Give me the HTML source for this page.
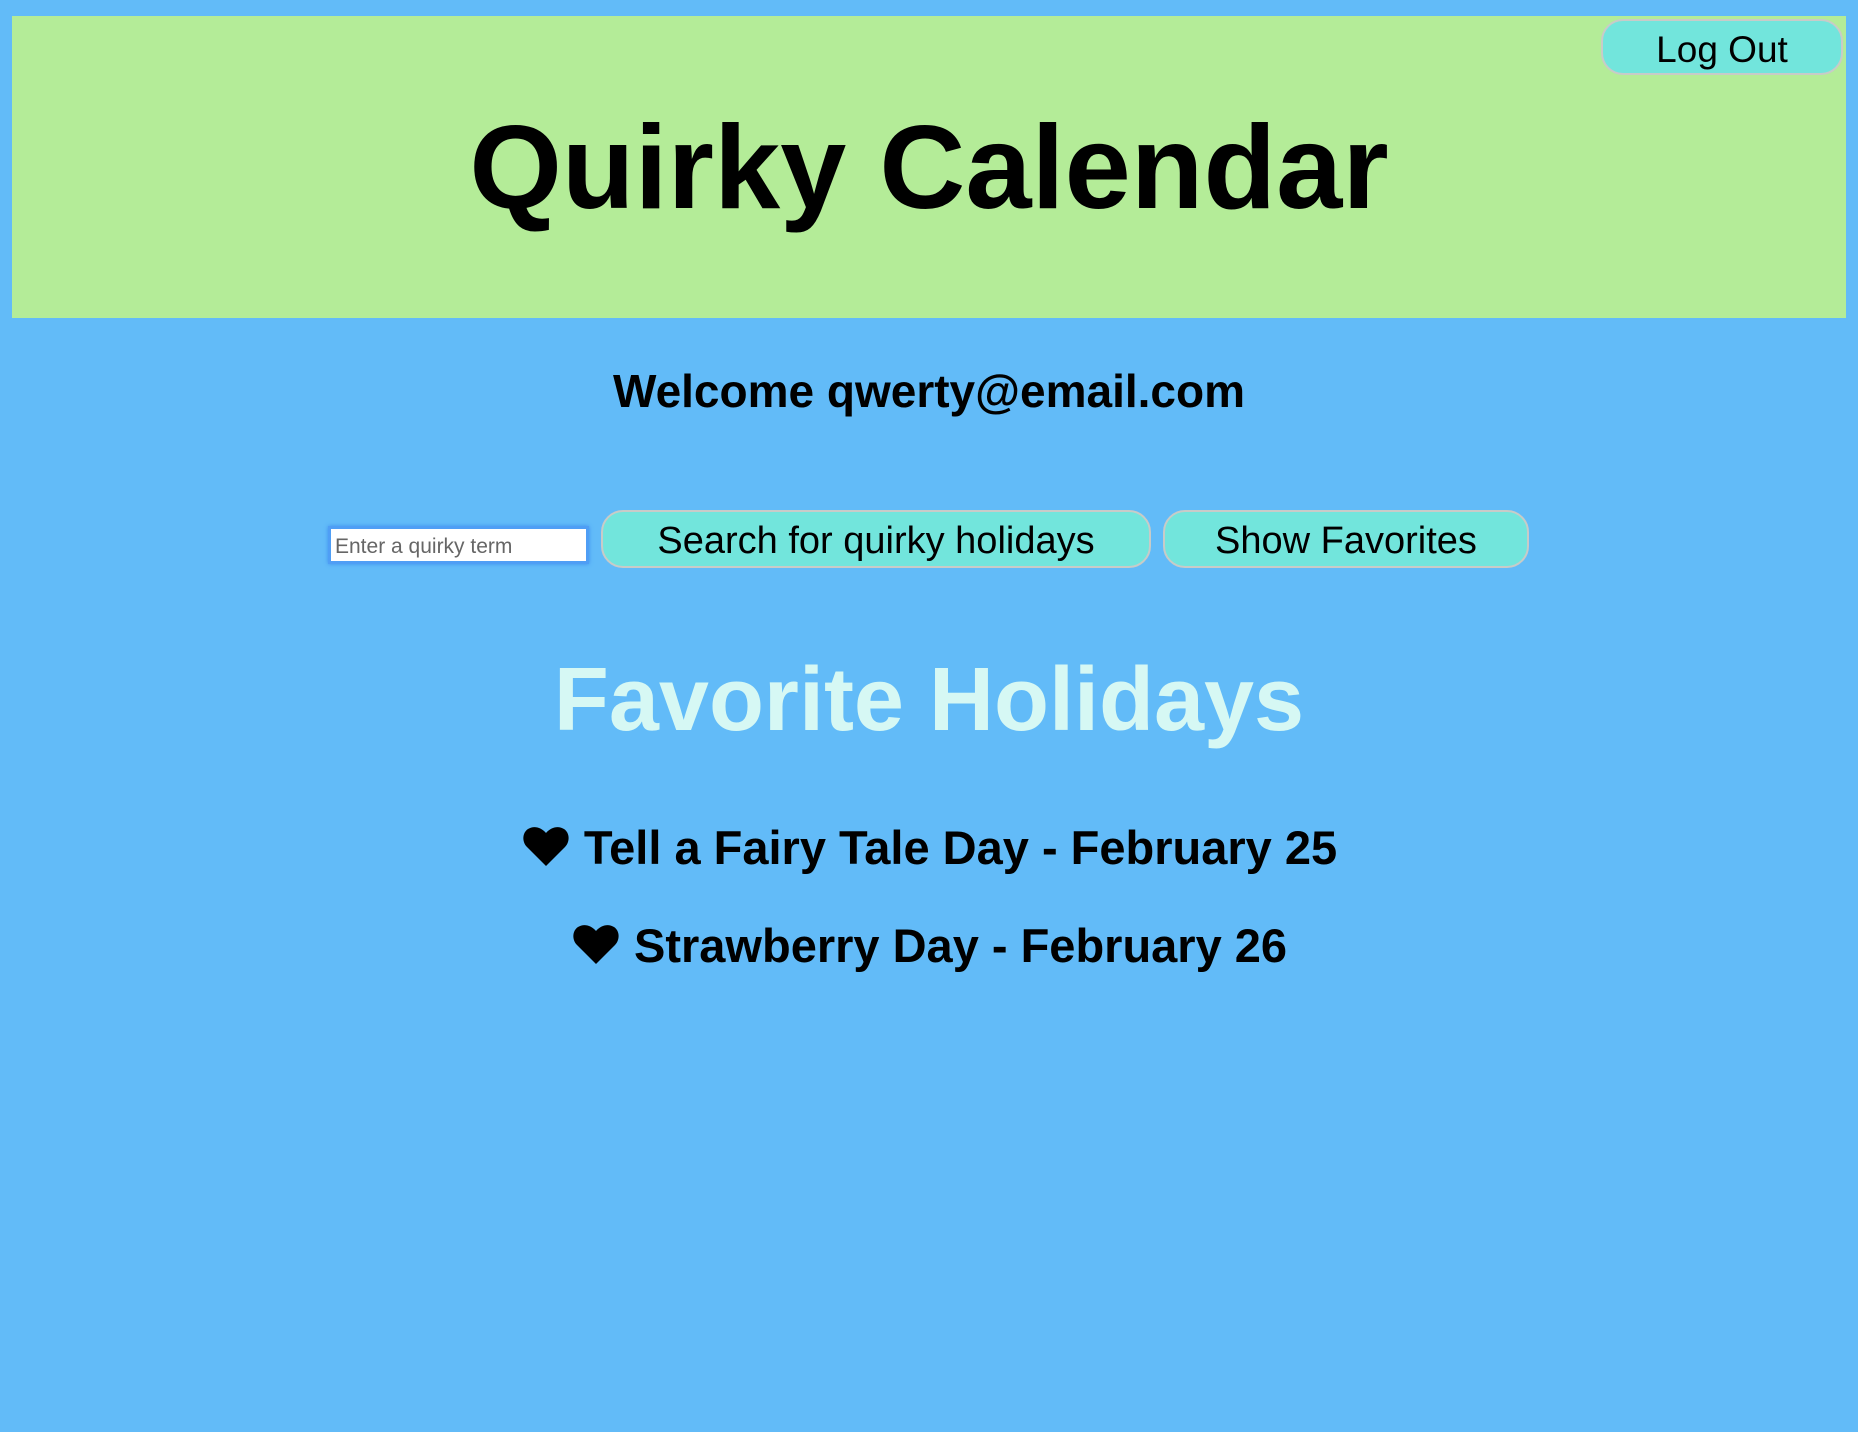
<!DOCTYPE html>
<html><head><style>
body{margin:0;width:1858px;height:1432px;background:#62bbf8;font-family:"Liberation Sans",sans-serif;position:relative;overflow:hidden}
.hdr{position:absolute;left:12px;top:16px;width:1834px;height:302px;background:#b4ec98}
.t{position:absolute;left:0;width:1858px;text-align:center;font-weight:bold;color:#000;white-space:nowrap}
.btn{position:absolute;background:#72e5dc;border:2px solid #c8cbc8;border-radius:22px;box-sizing:border-box;font-size:38px;text-align:center;color:#000}
.inp{position:absolute;left:328px;top:526px;width:261px;height:38px;background:#fff;border:3px solid #4f9ef5;box-shadow:0 0 4px #3d8ff0;box-sizing:border-box;font-size:21px;color:#666;padding:6px 0 0 4px}
svg{vertical-align:-4px}
</style></head><body>
<div class="hdr"></div>
<div class="btn" style="left:1601px;top:19px;width:242px;height:56px;line-height:57px;font-size:37px">Log Out</div>
<div class="t" style="top:98px;font-size:119px;line-height:140px">Quirky Calendar</div>
<div class="t" style="top:363px;font-size:46px;line-height:56px">Welcome qwerty@email.com</div>
<div class="inp">Enter a quirky term</div>
<div class="btn" style="left:601px;top:510px;width:550px;height:58px;line-height:58px">Search for quirky holidays</div>
<div class="btn" style="left:1163px;top:510px;width:366px;height:58px;line-height:58px">Show Favorites</div>
<div class="t" style="top:645px;font-size:90px;line-height:110px;color:#d6f8f4">Favorite Holidays</div>
<div class="t" style="top:820px;font-size:47px;line-height:56px"><svg width="50" height="44" viewBox="0 0 24 22"><path d="M12 21L2.5 11.5C0 9 0 4.5 3 2.5 5.8.7 9.5 1.5 12 4.5 14.5 1.5 18.2.7 21 2.5 24 4.5 24 9 21.5 11.5Z"/></svg> Tell a Fairy Tale Day - February 25</div>
<div class="t" style="top:918px;font-size:47px;line-height:56px"><svg width="50" height="44" viewBox="0 0 24 22"><path d="M12 21L2.5 11.5C0 9 0 4.5 3 2.5 5.8.7 9.5 1.5 12 4.5 14.5 1.5 18.2.7 21 2.5 24 4.5 24 9 21.5 11.5Z"/></svg> Strawberry Day - February 26</div>
</body></html>
